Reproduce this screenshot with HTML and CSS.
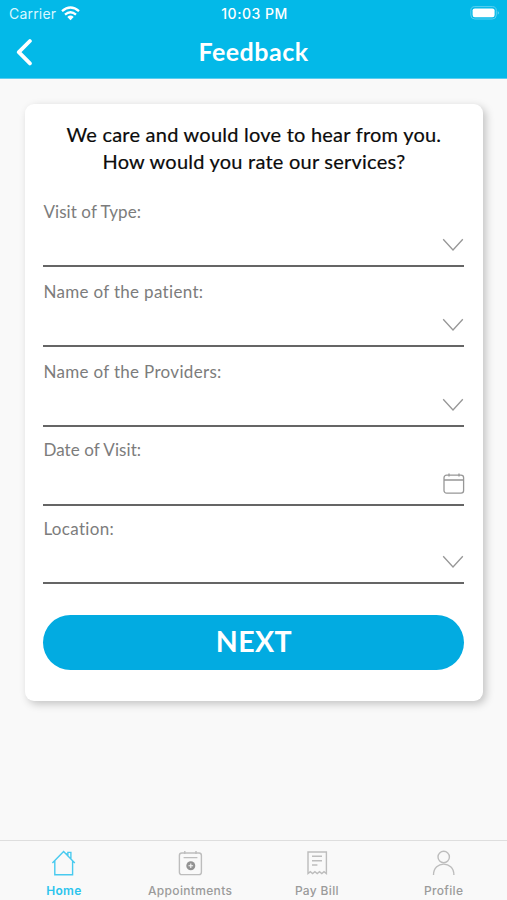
FILE: index.html
```html
<!DOCTYPE html>
<html lang="en">
<head>
<meta charset="utf-8">
<title>Feedback</title>
<link rel="stylesheet" href="styles.css">
</head>
<body>
<div class="screen">
  <header class="header">
    <div class="status">
      <div class="carrier"><span>Carrier</span>
        <svg width="19" height="15" viewBox="0 0 19 15"><g fill="none" stroke="#fff" stroke-width="2.3"><path d="M1 5.2Q9.5-2.2 18 5.2"/><path d="M4 8.6Q9.5 3.8 15 8.6"/></g><path d="M6.3 11Q9.5 8.2 12.7 11L9.5 14.2Z" fill="#fff"/></svg>
      </div>
      <span class="time">10:03 PM</span>
      <svg class="battery" width="30" height="14" viewBox="0 0 30 14"><rect x=".8" y=".6" width="25.5" height="12.4" rx="4" fill="none" stroke="#5bcff0"/><rect x="2.6" y="2.4" width="22" height="8.8" rx="2.2" fill="#fff"/><path d="M27.8 4.8Q29.6 6.8 27.8 8.8Z" fill="#8fdcf4"/></svg>
    </div>
    <div class="nav">
      <svg class="back" width="18" height="28" viewBox="0 0 18 28"><path d="M15.9 3L4.8 14.2L15.9 25.4" fill="none" stroke="#fff" stroke-width="3.8" stroke-linecap="round" stroke-linejoin="round"/></svg>
      <h1>Feedback</h1>
    </div>
  </header>
  <main class="content">
    <section class="card">
      <p class="intro">We care and would love to hear from you.<br>How would you rate our services?</p>
      <div class="field"><span class="narrow">Visit of Type:</span><svg class="chev" width="22" height="14" viewBox="0 0 22 14"><path d="M1.2 1.2L11 12L20.8 1.2"/></svg></div>
      <div class="field"><span>Name of the patient:</span><svg class="chev" width="22" height="14" viewBox="0 0 22 14"><path d="M1.2 1.2L11 12L20.8 1.2"/></svg></div>
      <div class="field"><span>Name of the Providers:</span><svg class="chev" width="22" height="14" viewBox="0 0 22 14"><path d="M1.2 1.2L11 12L20.8 1.2"/></svg></div>
      <div class="field short"><span class="narrow">Date of Visit:</span><svg class="cal" width="22" height="22" viewBox="0 0 22 22"><rect x="1" y="2.1" width="19.6" height="18" rx="2.6"/><path d="M1 7H20.6M6 .4V3.6M16 .4V3.6"/></svg></div>
      <div class="field short"><span>Location:</span><svg class="chev" width="22" height="14" viewBox="0 0 22 14"><path d="M1.2 1.2L11 12L20.8 1.2"/></svg></div>
      <button class="next">NEXT</button>
    </section>
  </main>
  <nav class="tabs">
    <div class="tab active">
      <svg width="26" height="28" viewBox="0 0 26 28"><path d="M2.4 14L13.6 2.6L24.8 14M4.8 12V25.8H22.6V12M16.2 4.6L17.9 6.4V3.4H20.9V9.6"/></svg>
      <span>Home</span>
    </div>
    <div class="tab">
      <svg width="26" height="28" viewBox="0 0 26 28"><rect x="2.4" y="4" width="22" height="21.6" rx="2.4"/><path d="M7.8 2V5M19 2V5M6.6 8.6H20.4"/><circle cx="13.8" cy="16.7" r="4.5" fill="#929292" stroke="none"/><path d="M13.8 14.4V19M11.5 16.7H16.1" stroke="#f9f9f9" stroke-width="1.1"/></svg>
      <span>Appointments</span>
    </div>
    <div class="tab">
      <svg width="26" height="28" viewBox="0 0 26 28"><path d="M4 24.6V3H22.4V24.6L20 22.7L17.8 24.6L15.5 22.7L13.2 24.6L10.9 22.7L8.6 24.6L6.3 22.7Z"/><path d="M8 7.3H18M8 11.7H18M8 16H13.4"/></svg>
      <span>Pay Bill</span>
    </div>
    <div class="tab">
      <svg width="26" height="28" viewBox="0 0 26 28"><circle cx="12.7" cy="8" r="5.7"/><path d="M2.5 26C2.5 11.5 22.9 11.5 22.9 26"/></svg>
      <span>Profile</span>
    </div>
  </nav>
</div>
</body>
</html>
```
FILE: styles.css
```css
* { box-sizing: border-box; }
body { margin: 0; font-family: Lato, "Open Sans", sans-serif; background: #f9f9f9; }
svg { display: block; flex: none; }
.screen { height: 900px; display: flex; flex-direction: column; overflow: hidden; }
.header { height: 79px; background: #03b9e8; color: #fff; border-bottom: 1px solid #5bcdf0; flex: none; }
.status { height: 27px; display: grid; grid-template-columns: 1fr auto 1fr; align-items: center; padding: 0 7px 0 9px; font-family: Inter, sans-serif; font-size: 14px; }
.carrier { display: flex; gap: 5px; align-items: center; color: #d9f7ff; font-size: 14px; letter-spacing: .2px; }
.carrier svg { margin-top: -1px; }
.time { font-weight: 500; letter-spacing: .5px; }
.battery { justify-self: end; margin-top: -1px; }
.nav { display: grid; grid-template-columns: 60px 1fr 60px; align-items: center; height: 50px; }
.back { margin-left: 14px; }
h1 { margin: -3px 0 0; text-align: center; font-size: 25px; line-height: 32px; font-weight: 700; letter-spacing: .5px; }
.content { flex: 1; padding: 25px 24px 0 25px; }
.card { height: 597px; background: #fff; border-radius: 9px; padding: 17px 18.6px 0 18.4px; box-shadow: 3px 3px 8px rgba(0,0,0,.22); }
.intro { margin: 0 0 18px; text-align: center; color: #0b0b0b; font-size: 20px; line-height: 27px; letter-spacing: .23px; white-space: nowrap; -webkit-text-stroke: .2px #0b0b0b; }
.field { height: 80px; border-bottom: 2px solid #656565; display: flex; flex-direction: column; justify-content: space-between; padding: 13px 0; color: #7c7c7c; font-size: 17px; line-height: 24px; letter-spacing: .32px; }
.field:nth-of-type(1) { height: 74px; padding-top: 7px; }
.field > span { align-self: flex-start; }
.field > .narrow { letter-spacing: .08px; }
.field > svg { align-self: flex-end; fill: none; stroke: #979797; stroke-width: 1.3; }
.field.short { height: 78.5px; padding-top: 11px; }
.field .cal { margin: 0 -1px -4px 0; }
.next { display: block; width: 100%; height: 55px; margin-top: 31px; padding: 0 0 3px; border: 0; border-radius: 28px; background: #02abe1; color: #fff; font: 700 28.5px/52px Lato, sans-serif; letter-spacing: .4px; }
.tabs { height: 60px; border-top: 1px solid #dedede; background: #f9f9f9; display: grid; grid-template-columns: repeat(4, 1fr); flex: none; }
.tab { display: flex; flex-direction: column; align-items: center; color: #9b9b9b; font-family: Inter, sans-serif; font-size: 12px; line-height: 16px; font-weight: 500; letter-spacing: .33px; padding-top: 8px; gap: 6px; white-space: nowrap; }
.tab svg { fill: none; stroke: #bdbdbd; stroke-width: 1.4; }
.tab.active { color: #2cc4ed; font-weight: 600; }
.tab.active span { padding-left: 1px; }
.tab.active svg { stroke: #48caef; }
```
